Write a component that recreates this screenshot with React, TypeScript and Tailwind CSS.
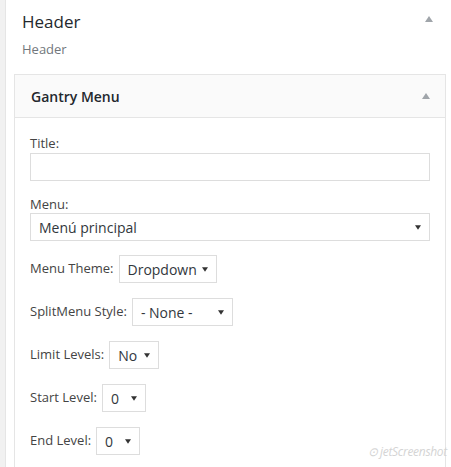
import React from "react";

const font = { fontFamily: '"Open Sans", "Noto Sans", Arial, sans-serif' };

function Caret({ up = false, className = "" }: { up?: boolean; className?: string }) {
  return (
    <svg width="8" height="6" viewBox="0 0 8 6" className={className}>
      {up ? <path d="M4 0 L8 6 L0 6 Z" fill="currentColor" /> : <path d="M0 0 L8 0 L4 6 Z" fill="currentColor" />}
    </svg>
  );
}

function Select({ value, width }: { value: string; width: string }) {
  return (
    <div
      className={`flex h-[28px] items-center justify-between border border-[#dddddd] bg-white pl-[8px] pr-[8px] text-[14px] text-[#32373c] ${width}`}
    >
      <span className="pt-[1px]">{value}</span>
      <Caret className="h-[5px] w-[6px] shrink-0 text-[#333]" />
    </div>
  );
}

function InlineRow({ label, value, width }: { label: string; value: string; width: string }) {
  return (
    <div className="flex items-center gap-[5px]">
      <span className="text-[13px] text-[#444]">{label}</span>
      <Select value={value} width={width} />
    </div>
  );
}

export default function App() {
  return (
    <div className="flex h-[467px] w-[451px] overflow-hidden bg-[#f1f1f1]" style={font}>
      <div className="relative ml-[5px] flex-1 border-l border-[#e5e5e5] bg-white pl-[8px] pr-[5px]">
        <div className="flex items-start justify-between pl-[8px] pr-[13px] pt-[10px]">
          <h3 className="text-[17px] font-medium leading-[24px] text-[#23282d]">Header</h3>
          <Caret up className="mt-[6px] h-[6px] w-[8px] text-[#a0a5aa]" />
        </div>
        <div className="pl-[8px] pt-[6px] text-[13px] leading-[18px] text-[#72777c]">Header</div>

        <div className="mt-[16px] border border-[#e5e5e5]">
          <div className="flex h-[43px] items-center justify-between border-b border-[#e5e5e5] bg-[#fafafa] pl-[16px] pr-[15px]">
            <span className="text-[14px] font-semibold text-[#23282d]">Gantry Menu</span>
            <Caret up className="h-[6px] w-[8px] text-[#a0a5aa]" />
          </div>
          <div className="flex flex-col px-[15px] pb-[20px] pt-[16px]">
            <label className="text-[13px] leading-[18px] text-[#444]">Title:</label>
            <div className="mt-[1px] h-[28px] w-[400px] border border-[#dddddd] bg-white" />
            <label className="mt-[14px] text-[13px] leading-[18px] text-[#444]">Menu:</label>
            <Select value="Menú principal" width="w-[400px]" />
            <div className="mt-[14px] flex flex-col gap-[15px]">
              <InlineRow label="Menu Theme:" value="Dropdown" width="w-[98px]" />
              <InlineRow label="SplitMenu Style:" value="- None -" width="w-[101px]" />
              <InlineRow label="Limit Levels:" value="No" width="w-[50px]" />
              <InlineRow label="Start Level:" value="0" width="w-[44px]" />
              <InlineRow label="End Level:" value="0" width="w-[44px]" />
            </div>
          </div>
        </div>
        <div className="absolute bottom-[6px] right-[4px] text-[12px] italic tracking-tight text-[#d4d4d4]">
          ⊙ jetScreenshot
        </div>
      </div>
    </div>
  );
}
